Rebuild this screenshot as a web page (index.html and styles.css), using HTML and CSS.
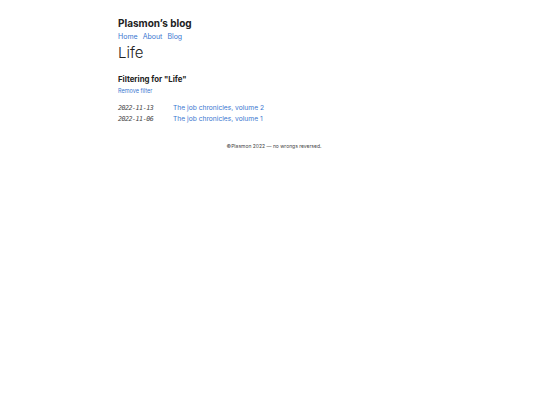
FILE: index.html
```html
<!DOCTYPE html>
<html lang="en">
<head>
    <meta charset="UTF-8">
    <meta name="viewport" content="width=device-width, initial-scale=1.0">
    <title>Life - Plasmon's blog</title>
    <link rel="stylesheet" href="styles.css">
</head>
<body>
    <div class="container">
        <header>
            <div class="site-title">Plasmon’s blog</div>
            <nav>
                <a href="#">Home</a>
                <a href="#">About</a>
                <a href="#">Blog</a>
            </nav>
        </header>
        <h1>Life</h1>
        <h3>Filtering for "Life"</h3>
        <a class="remove" href="#">Remove filter</a>
        <ul class="posts">
            <li><time>2022-11-13</time><a href="#">The job chronicles, volume 2</a></li>
            <li><time>2022-11-06</time><a href="#">The job chronicles, volume 1</a></li>
        </ul>
        <footer>©Plasmon 2022 — no wrongs reversed.</footer>
    </div>
</body>
</html>
```

FILE: styles.css
```css
body { margin: 0; font-family: Inter, "Noto Sans", sans-serif; color: #222; background: #fff; }
a { color: #3a77d0; text-decoration: none; }
.container { width: 304px; margin: 0 auto; padding-top: 17px; }
.site-title { font-size: 10px; font-weight: 700; line-height: 13px; }
nav { font-size: 7px; line-height: 12px; margin-top: 1px; display: flex; gap: 5px; }
h1 { font-size: 15px; font-weight: 300; margin: 0; line-height: 20px; }
h3 { font-size: 7.8px; font-weight: 700; margin: 10px 0 0; line-height: 12px; }
.remove { display: block; font-size: 5.5px; line-height: 11px; margin-top: 1px; }
.posts { list-style: none; margin: 6px 0 0; padding: 0; }
.posts li { display: flex; font-size: 6.7px; line-height: 11px; }
.posts time { width: 55px; font-family: "DejaVu Sans Mono", monospace; font-style: italic; font-size: 6.6px; letter-spacing: -0.45px; color: #444; }
footer { text-align: center; font-size: 5px; color: #444; margin-top: 18px; padding-left: 8px; }
```
